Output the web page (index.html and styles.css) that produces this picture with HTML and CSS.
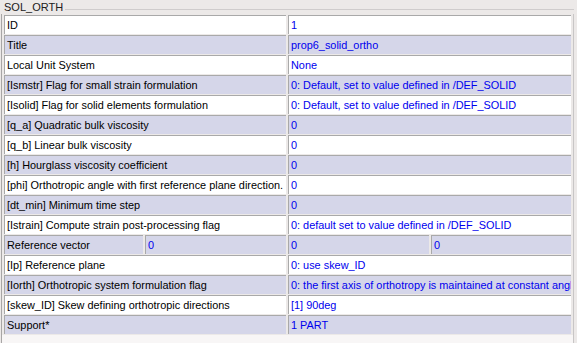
FILE: index.html
```html
<!DOCTYPE html>
<html>
<head>
<meta charset="utf-8">
<link rel="stylesheet" href="styles.css">
</head>
<body>
<div class="frame">
  <div class="legend"><span class="legend-text">SOL_ORTH</span><span class="legend-line"></span></div>
  <div class="group">
    <div class="table">
      <div class="row w"><div class="cell label">ID</div><div class="cell val">1</div></div>
      <div class="row b"><div class="cell label">Title</div><div class="cell val">prop6_solid_ortho</div></div>
      <div class="row w"><div class="cell label">Local Unit System</div><div class="cell val">None</div></div>
      <div class="row b"><div class="cell label">[Ismstr] Flag for small strain formulation</div><div class="cell val">0: Default, set to value defined in /DEF_SOLID</div></div>
      <div class="row w"><div class="cell label">[Isolid] Flag for solid elements formulation</div><div class="cell val">0: Default, set to value defined in /DEF_SOLID</div></div>
      <div class="row b"><div class="cell label">[q_a] Quadratic bulk viscosity</div><div class="cell val">0</div></div>
      <div class="row w"><div class="cell label">[q_b] Linear bulk viscosity</div><div class="cell val">0</div></div>
      <div class="row b"><div class="cell label">[h] Hourglass viscosity coefficient</div><div class="cell val">0</div></div>
      <div class="row w"><div class="cell label">[phi] Orthotropic angle with first reference plane direction.</div><div class="cell val">0</div></div>
      <div class="row b"><div class="cell label">[dt_min] Minimum time step</div><div class="cell val">0</div></div>
      <div class="row w"><div class="cell label">[Istrain] Compute strain post-processing flag</div><div class="cell val">0: default set to value defined in /DEF_SOLID</div></div>
      <div class="row b vec"><div class="cell label">Reference vector</div><div class="cell val">0</div><div class="cell val">0</div><div class="cell val">0</div></div>
      <div class="row w"><div class="cell label">[Ip] Reference plane</div><div class="cell val">0: use skew_ID</div></div>
      <div class="row b"><div class="cell label">[Iorth] Orthotropic system formulation flag</div><div class="cell val">0: the first axis of orthotropy is maintained at constant angle with respect to the shell element</div></div>
      <div class="row w"><div class="cell label">[skew_ID] Skew defining orthotropic directions</div><div class="cell val">[1] 90deg</div></div>
      <div class="row b"><div class="cell label">Support*</div><div class="cell val">1 PART</div></div>
    </div>
    <div class="filler"></div>
  </div>
</div>
</body>
</html>
```

FILE: styles.css
```css
html, body {
  margin: 0;
  padding: 0;
  background: #ece9e8;
  width: 577px;
  height: 343px;
  overflow: hidden;
  font-family: "Liberation Sans", Arial, sans-serif;
  font-size: 10.9px;
}

.frame {
  width: 574px;
  height: 343px;
  display: flex;
  flex-direction: column;
}

.legend {
  display: flex;
  align-items: center;
  height: 14px;
  padding-left: 4px;
}

.legend-text {
  color: #202020;
  font-size: 11px;
  line-height: 14px;
  padding-right: 2px;
}

.legend-line {
  flex: 1;
  height: 0;
  border-top: 1px solid #cfcccc;
  margin-top: 4px;
}

.group {
  flex: 1;
  display: flex;
  flex-direction: column;
  margin-left: 1px;
  border-left: 1px solid #a8a6a6;
  border-right: 1px solid #c8c6c6;
  padding: 1px 2px 0 2px;
}

.table {
  display: flex;
  flex-direction: column;
}

.row {
  display: grid;
  grid-template-columns: 282px 283px;
  column-gap: 2px;
  height: 20px;
}

.row.vec {
  grid-template-columns: 139px 141px 141px 140px;
}

.cell {
  height: 19px;
  box-sizing: border-box;
  border-top: 1px solid #a9a9a9;
  border-left: 1px solid #a9a9a9;
  padding-left: 2px;
  line-height: 18px;
  white-space: nowrap;
  overflow: hidden;
}

.w .cell { background: #ffffff; }
.b .cell { background: #d5d6e9; }

.label { color: #000000; }
.val { color: #0000ee; }

.filler {
  flex: 1;
  margin: 0 -2px;
  background: #f8f6f6;
}
```
